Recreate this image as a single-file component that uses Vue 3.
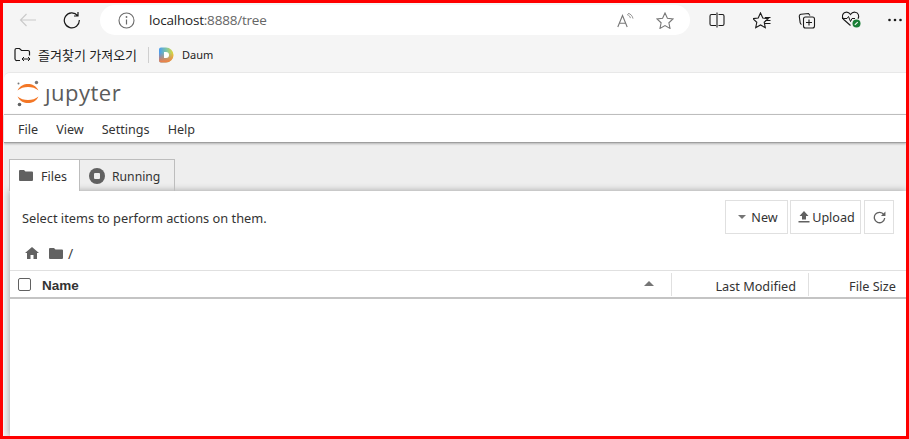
<template>
  <div class="frame">
    <div class="toolbar">
      <button class="tool back">
        <svg width="18" height="14" viewBox="0 0 18 14"><path d="M17 7H1.500M7.500 1 1.500 7l6 6" fill="none" stroke="#c9c9c9" stroke-width="1.100" /></svg>
      </button>
      <button class="tool reload">
        <svg width="18" height="18" viewBox="0 0 18 18"><path d="M14.600 4.600A7.500 7.500 0 1 0 16.300 9M15 1v4h-4" fill="none" stroke="#1a1a1a" stroke-width="1.200" /></svg>
      </button>
      <div class="address">
        <svg class="info" width="17" height="17" viewBox="0 0 17 17"><circle cx="8.500" cy="8.500" r="7.500" fill="none" stroke="#6b6b6b" stroke-width="1.100" /><path d="M8.500 7.500v5" stroke="#6b6b6b" stroke-width="1.200" /><circle cx="8.500" cy="5" r=".9" fill="#6b6b6b" /></svg>
        <span class="url">localhost<span class="url-rest">:8888/tree</span></span>
        <svg class="aloud" width="17" height="15" viewBox="0 0 17 15"><path d="M.8 14 5.500 2.500 10.200 14M2.400 10.200h6.200" fill="none" stroke="#777" stroke-width="1.100" /><path d="M10 1.500c2 .6 3 1.800 3.400 3.600M11 .2c2.800.8 4.400 2.600 5 5.400" fill="none" stroke="#888" stroke-width=".9" /></svg>
        <svg class="star" width="18" height="17" viewBox="0 0 18 17"><path d="m9 1 2.400 5.200 5.600.7-4.100 3.900 1.100 5.600L9 13.600l-5 2.800 1.100-5.600L1 6.900l5.600-.7z" fill="none" stroke="#777" stroke-width="1.100" /></svg>
      </div>
      <button class="tool edge split">
        <svg width="16" height="16" viewBox="0 0 16 16"><path d="M7 2.500H2.500a1.500 1.500 0 0 0-1.500 1.500v8a1.500 1.500 0 0 0 1.500 1.500H7M9.500 2.500h4a1.500 1.500 0 0 1 1.500 1.500v8a1.500 1.500 0 0 1-1.500 1.500h-4M8 .5v15" fill="none" stroke="#1a1a1a" stroke-width="1.100" /></svg>
      </button>
      <button class="tool edge">
        <svg width="18" height="17" viewBox="0 0 18 17"><path d="M7.500.9 9.800 6l5.400.6-4 3.700 1.100 5.400-4.800-2.800-4.800 2.800 1.100-5.400-4-3.700L5.200 6z" fill="none" stroke="#1a1a1a" stroke-width="1.100" /><path d="M12 5.500h5.500M12.500 8.500h5M12 11.500h5.500" stroke="#1a1a1a" stroke-width="1" /></svg>
      </button>
      <button class="tool edge">
        <svg width="18" height="17" viewBox="0 0 18 17"><path d="M12 3.500 10.500 1.500 3 2.200a2 2 0 0 0-1.700 2.300l.9 6.300c.1.900.6 1.500 1.300 1.800" fill="none" stroke="#1a1a1a" stroke-width="1.100" /><rect x="5.500" y="5" width="11" height="11" rx="2" fill="none" stroke="#1a1a1a" stroke-width="1.100" /><path d="M11 7.500v6M8 10.500h6" stroke="#1a1a1a" stroke-width="1.100" /></svg>
      </button>
      <button class="tool edge heart">
        <svg width="22" height="20" viewBox="0 0 22 20"><path d="M9.500 15.500 2.700 9.500C.3 7.100 1.300 2.500 5 2.200c2-.2 3.500.8 4.500 2.300 1-1.500 2.500-2.500 4.500-2.300 3.500.3 4.500 4 3 6.500" fill="none" stroke="#1a1a1a" stroke-width="1.100" /><path d="M1 8.500h5l1.500-2 2 5 1.500-3h3" fill="none" stroke="#1a1a1a" stroke-width="1" /><circle cx="15.500" cy="13.500" r="4" fill="#1a7f37" /><path d="m13.800 14.900 2.900-2.700" stroke="#fff" stroke-width="1.100" /></svg>
      </button>
      <button class="tool more">
        <svg width="16" height="4" viewBox="0 0 16 4"><circle cx="2.500" cy="2" r="1.300" fill="#1a1a1a" /><circle cx="8" cy="2" r="1.300" fill="#1a1a1a" /><circle cx="13.500" cy="2" r="1.300" fill="#1a1a1a" /></svg>
      </button>
    </div>

    <div class="bookmarks">
      <svg width="17" height="16" viewBox="0 0 17 16"><path d="M6 13.500H3A1.800 1.800 0 0 1 1 12V3a1.500 1.500 0 0 1 1.500-1.500h3L7.500 3.500h6.500A1.500 1.500 0 0 1 15.500 5v3.500" fill="none" stroke="#1a1a1a" stroke-width="1.200" /><path d="M8 12h8M8 12l2-2M8 12l2 2M16 12l-2-2M16 12l-2 2" fill="none" stroke="#1a1a1a" stroke-width="1" /></svg>
      <span class="bm-label">즐겨찾기 가져오기</span>
      <span class="bm-sep"></span>
      <svg class="daum" width="15" height="16" viewBox="0 0 15 16">
        <defs>
          <linearGradient id="daumBase" x1="0" y1="0" x2="1" y2="0">
            <stop offset="0" stop-color="#4a9bf0" />
            <stop offset=".55" stop-color="#86c9a0" />
            <stop offset="1" stop-color="#e6d62e" />
          </linearGradient>
          <linearGradient id="daumWarm" x1="0" y1="0" x2="0" y2="1">
            <stop offset=".35" stop-color="#f5634f" stop-opacity="0" />
            <stop offset="1" stop-color="#f7803c" />
          </linearGradient>
        </defs>
        <path d="M0 2.500A2 2 0 0 1 2 .5h5a7.500 7.500 0 0 1 0 15H2a2 2 0 0 1-2-2z" fill="url(#daumBase)" />
        <path d="M0 2.500A2 2 0 0 1 2 .5h5a7.500 7.500 0 0 1 0 15H2a2 2 0 0 1-2-2z" fill="url(#daumWarm)" />
        <path d="M5 5h2a3 3 0 0 1 0 6H5z" fill="#fff" />
      </svg>
      <span class="bm-daum">Daum</span>
    </div>

    <div class="page">
      <header class="brand">
        <svg width="26" height="29" viewBox="0 0 26 29">
          <path d="M2.500 11.500C5 6.500 9 5 13 5s8 1.500 10.500 6.500C20.500 9 17 8 13 8s-7.500 1-10.500 3.500z" fill="#f37726" />
          <path d="M2.500 17.500C5 22.500 9 24 13 24s8-1.500 10.500-6.500C20.500 20 17 21 13 21s-7.500-1-10.500-3.500z" fill="#f37726" />
          <circle cx="21.500" cy="3.500" r="1.700" fill="#767677" />
          <circle cx="3.500" cy="4.500" r="1" fill="#767677" />
          <circle cx="4.500" cy="25.500" r="1.800" fill="#616262" />
        </svg>
        <span class="wordmark" aria-label="jupyter">ȷupyter</span>
      </header>
      <nav class="menu">
        <span v-for="item in menuItems" :key="item">{{ item }}</span>
      </nav>
      <div class="main">
        <div class="tabs">
          <div class="tab active">
            <svg width="14" height="11" viewBox="0 0 14 11"><path d="M0 1a1 1 0 0 1 1-1h4l1.500 1.500H13a1 1 0 0 1 1 1V10a1 1 0 0 1-1 1H1a1 1 0 0 1-1-1z" fill="#616161" /></svg>
            Files
          </div>
          <div class="tab running">
            <svg width="16" height="16" viewBox="0 0 16 16"><circle cx="8" cy="8" r="8" fill="#616161" /><rect x="5" y="5" width="6" height="6" rx="1" fill="#eee" /></svg>
            Running
          </div>
        </div>
        <section class="panel">
          <div class="actions">
            <span class="hint">Select items to perform actions on them.</span>
            <div class="buttons">
              <button class="btn new"><i class="caret"></i>New</button>
              <button class="btn upload">
                <svg width="12" height="12" viewBox="0 0 12 12"><path d="M6 0 10.500 5H8v3.500H4V5H1.500zM.5 10h11v1.500H.5z" fill="#616161" /></svg>
                Upload
              </button>
              <button class="btn refresh">
                <svg width="13" height="13" viewBox="0 0 12 12"><path d="M10 3.300A4.800 4.800 0 1 0 10.800 6.500" fill="none" stroke="#616161" stroke-width="1.200" /><path d="M11.500 .5v4.200H7.300z" fill="#616161" /></svg>
              </button>
            </div>
          </div>
          <div class="crumbs">
            <svg width="14" height="12" viewBox="0 0 14 12"><path d="M7 0 14 6h-2v6H8.500V8h-3v4H2V6H0z" fill="#616161" /></svg>
            <svg width="14" height="11" viewBox="0 0 14 11"><path d="M0 1a1 1 0 0 1 1-1h4l1.500 1.500H13a1 1 0 0 1 1 1V10a1 1 0 0 1-1 1H1a1 1 0 0 1-1-1z" fill="#616161" /></svg>
            <span class="slash">/</span>
          </div>
          <div class="list-head">
            <span class="check"></span>
            <span class="col-name">Name</span>
            <i class="sort"></i>
            <span class="col-modified">Last Modified</span>
            <span class="col-size">File Size</span>
          </div>
        </section>
      </div>
    </div>
  </div>
</template>

<script setup>
const menuItems = ['File', 'View', 'Settings', 'Help'];
</script>

<style>
html,
body {
  margin: 0;
  overflow: hidden;
}
</style>

<style scoped>
.frame {
  box-sizing: border-box;
  width: 909px;
  height: 439px;
  border: 3px solid #ff0000;
  display: flex;
  flex-direction: column;
  overflow: hidden;
  background: #f5f5f5;
  font-family: "Noto Sans", "Noto Sans CJK KR", sans-serif;
  color: #222;
}

button {
  border: 0;
  background: none;
  padding: 0;
  font: inherit;
  color: inherit;
}

.toolbar {
  height: 34px;
  flex: none;
  display: flex;
  align-items: center;
  padding-left: 8px;
}

.tool {
  flex: none;
  width: 34px;
  height: 30px;
  display: flex;
  align-items: center;
  justify-content: center;
}

.reload {
  margin-left: 10px;
}

.address {
  flex: none;
  margin-left: 11px;
  width: 590px;
  height: 30px;
  background: #fff;
  border-radius: 15px;
  display: flex;
  align-items: center;
  box-sizing: border-box;
  padding: 0 16px 0 18px;
}

.url {
  margin-left: 14px;
  font-family: "Open Sans", sans-serif;
  font-size: 13.5px;
  letter-spacing: -0.2px;
  color: #1f1f1f;
}

.url-rest {
  color: #666;
}

.aloud {
  margin-left: auto;
}

.star {
  margin-left: 22px;
}

.edge {
  width: 45px;
}

.split {
  margin-left: 4px;
}

.more {
  width: 42px;
}

.bookmarks {
  height: 35px;
  flex: none;
  display: flex;
  align-items: center;
  padding-left: 11px;
}

.bm-label {
  margin-left: 7px;
  font-size: 13px;
  color: #222;
}

.bm-sep {
  width: 1px;
  height: 16px;
  margin-left: 11px;
  background: #cfcfcf;
}

.daum {
  margin-left: 10px;
}

.bm-daum {
  margin-left: 8px;
  font-size: 11px;
}

.page {
  flex: 1;
  min-height: 0;
  margin-left: 1px;
  display: flex;
  flex-direction: column;
  background: #fff;
  border-top: 1px solid #e8e8e8;
  border-top-left-radius: 6px;
}

.brand {
  height: 41px;
  flex: none;
  display: flex;
  align-items: center;
  padding-left: 11px;
  box-sizing: border-box;
}

.wordmark {
  margin-left: 4px;
  font-family: "Open Sans", sans-serif;
  font-size: 22px;
  letter-spacing: 0.5px;
  color: #5b5b5b;
  position: relative;
  top: -2px;
}

.menu {
  height: 29px;
  flex: none;
  box-sizing: border-box;
  border-top: 1px solid #bdbdbd;
  border-bottom: 1px solid #9e9e9e;
  box-shadow: 0 1px 2px rgba(0, 0, 0, 0.25);
  position: relative;
  display: flex;
  align-items: center;
  gap: 18px;
  padding-left: 14px;
  padding-top: 2px;
  font-size: 12.600px;
  color: #333;
}

.main {
  flex: 1;
  min-height: 0;
  display: flex;
  flex-direction: column;
  background: #eee;
  padding: 16px 0 0 5px;
}

.tabs {
  display: flex;
  height: 32px;
  flex: none;
  box-sizing: border-box;
  position: relative;
  z-index: 1;
}

.tab {
  box-sizing: border-box;
  height: 32px;
  display: flex;
  align-items: center;
  gap: 8px;
  padding: 2px 12px 0 9px;
  border: 1px solid #bdbdbd;
  border-bottom: 0;
  margin-right: -1px;
  font-size: 12.500px;
  color: #333;
}

.tab svg {
  position: relative;
  top: -1px;
}

.tab.active {
  background: #fff;
  width: 71px;
}

.tab.running {
  width: 96px;
  gap: 7px;
  font-size: 12.200px;
}

.panel {
  flex: 1;
  margin-left: 1px;
  background: #fff;
  box-shadow: 0 0 7px rgba(0, 0, 0, 0.35);
  display: flex;
  flex-direction: column;
}

.actions {
  height: 34px;
  margin-top: 9px;
  flex: none;
  display: flex;
  align-items: center;
  justify-content: space-between;
  padding: 0 12px;
}

.hint {
  padding-top: 2px;
  font-size: 12.800px;
  color: #333;
}

.buttons {
  display: flex;
  gap: 2px;
}

.btn {
  box-sizing: border-box;
  height: 34px;
  border: 1px solid #e0e0e0;
  display: flex;
  align-items: center;
  justify-content: center;
  gap: 2px;
  font-size: 12.600px;
  color: #333;
}

.new {
  width: 63px;
  gap: 5px;
  padding-left: 3px;
}

.upload {
  width: 71px;
  padding-left: 2px;
}

.refresh {
  width: 30px;
  margin-left: 1px;
}

.caret {
  width: 0;
  height: 0;
  border: 4px solid transparent;
  border-top-color: #757575;
  border-bottom: 0;
}

.crumbs {
  height: 36px;
  flex: none;
  box-sizing: border-box;
  padding: 2px 0 0 15px;
  display: flex;
  align-items: center;
  gap: 10px;
}

.slash {
  margin-left: -5px;
  font-size: 14px;
  color: #444;
}

.list-head {
  height: 29px;
  flex: none;
  box-sizing: border-box;
  border-top: 1px solid #e0e0e0;
  border-bottom: 2px solid #c4c4c4;
  display: flex;
  align-items: center;
  font-size: 12.700px;
  color: #333;
}

.check {
  box-sizing: border-box;
  width: 13px;
  height: 13px;
  margin-left: 8px;
  border: 1px solid #616161;
  border-radius: 2px;
}

.col-name {
  margin-left: 11px;
  width: 602px;
  padding-top: 2px;
  font-family: "Liberation Sans", sans-serif;
  font-size: 13.500px;
  font-weight: 700;
}

.sort {
  width: 0;
  height: 0;
  border: 5px solid transparent;
  border-bottom-color: #757575;
  border-top: 0;
  position: relative;
  top: -1px;
}

.col-modified,
.col-size {
  height: 23px;
  line-height: 27px;
  text-align: right;
  border-left: 1px solid #e0e0e0;
  box-sizing: border-box;
}

.col-modified {
  margin-left: 17px;
  width: 137px;
  padding-right: 12px;
}

.col-size {
  width: 97px;
  padding-right: 9px;
}
</style>
